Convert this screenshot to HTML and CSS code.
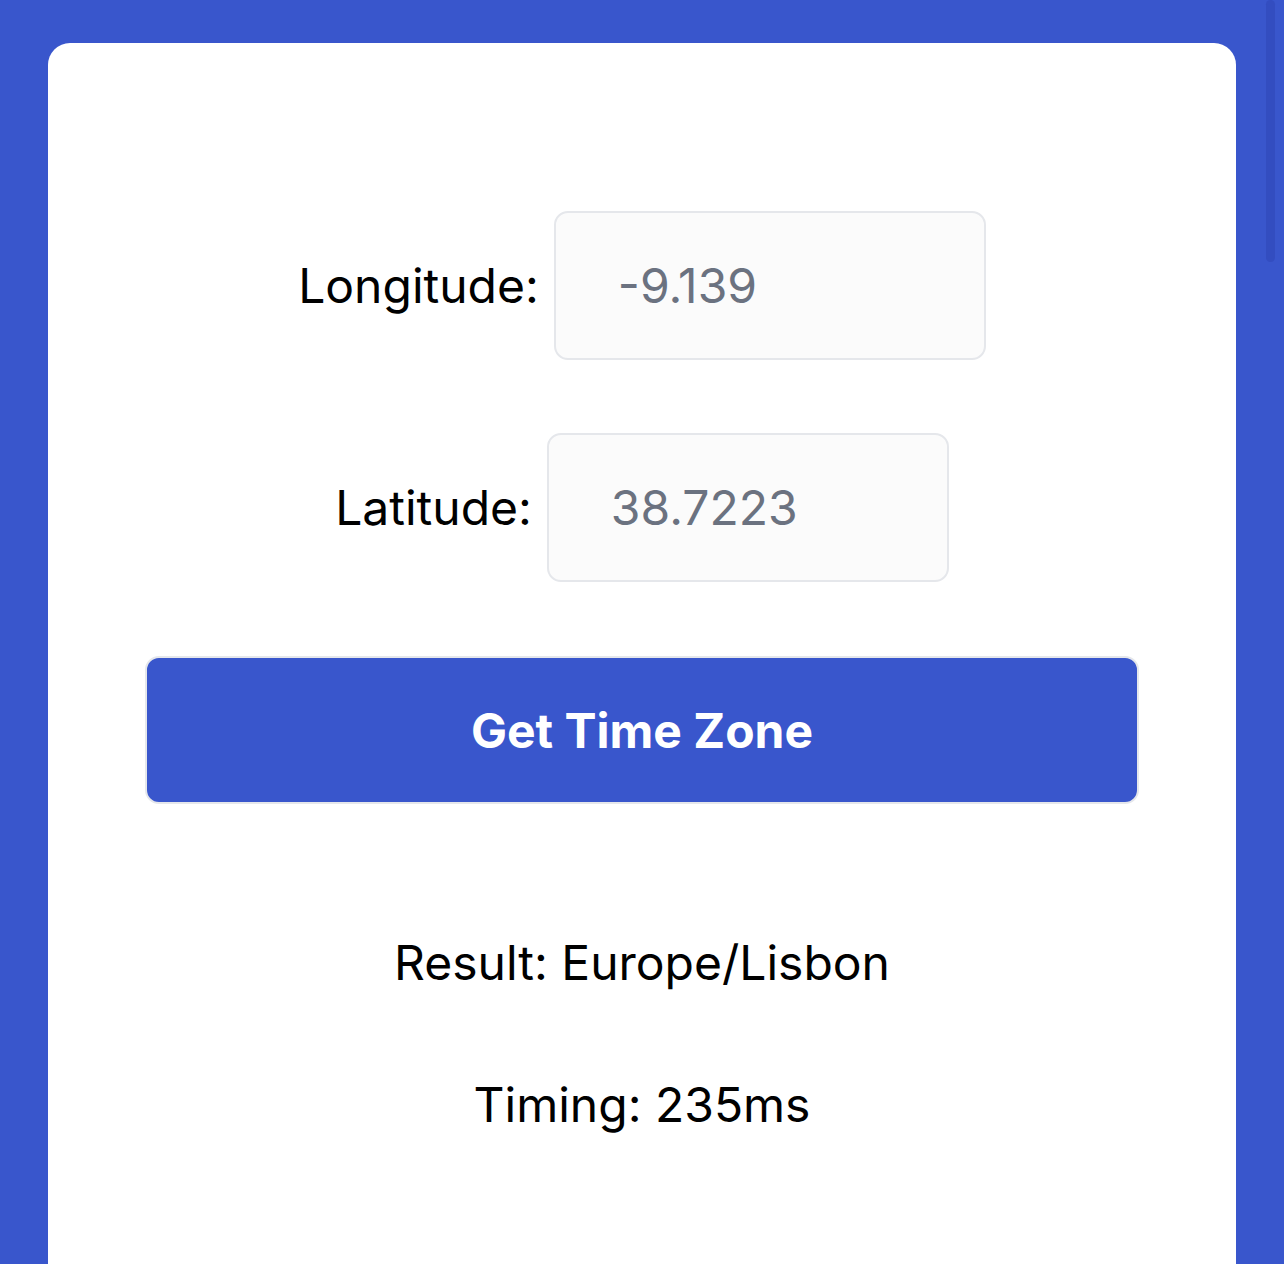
FILE: index.html
```html
<!DOCTYPE html>
<html lang="en">
<head>
<meta charset="utf-8">
<title>Time Zone</title>
<link rel="stylesheet" href="styles.css">
</head>
<body>
<div class="scrollbar"></div>
<main class="card">
  <div class="field">
    <label class="label" for="lon">Longitude:</label>
    <input class="input input-lon" id="lon" type="text" value="-9.139">
  </div>
  <div class="field">
    <label class="label" for="lat">Latitude:</label>
    <input class="input input-lat" id="lat" type="text" value="38.7223">
  </div>
  <button class="btn" type="button">Get Time Zone</button>
  <p class="result">Result: Europe/Lisbon</p>
  <p class="result timing">Timing: 235ms</p>
</main>
</body>
</html>
```
FILE: styles.css
```css
html, body {
  margin: 0;
  padding: 0;
}
body {
  background: #3956cc;
  font-family: Inter, "Noto Sans", sans-serif;
  padding: 43px 48px 0 48px;
  height: 100vh;
  box-sizing: border-box;
  overflow: hidden;
  display: flex;
  flex-direction: column;
}
.scrollbar {
  position: absolute;
  top: 0;
  right: 9px;
  width: 9px;
  height: 262px;
  border-radius: 5px;
  background: rgba(40, 60, 170, 0.35);
}
.card {
  flex: 1;
  background: #ffffff;
  border-radius: 22px 22px 0 0;
  display: flex;
  flex-direction: column;
  align-items: center;
  padding-top: 168px;
  box-sizing: border-box;
  overflow: hidden;
}
.field {
  display: flex;
  align-items: center;
  gap: 15px;
  margin-bottom: 73px;
}
.label {
  font-size: 48px;
  line-height: 58px;
  color: #000;
}
.input {
  height: 149px;
  box-sizing: border-box;
  border: 2px solid #e5e7eb;
  border-radius: 14px;
  background: #fbfbfb;
  font-family: Inter, "Noto Sans", sans-serif;
  font-size: 48px;
  color: #6b7280;
  padding: 0 0 0 62px;
  outline: none;
}
.input-lon { width: 432px; }
.input-lat { width: 402px; }
.btn {
  width: 994px;
  height: 148px;
  margin-top: 1px;
  flex-shrink: 0;
  background: #3956cc;
  border: 2px solid #e5e7eb;
  border-radius: 14px;
  color: #fff;
  font-family: Inter, "Noto Sans", sans-serif;
  font-weight: 700;
  font-size: 48px;
}
.result {
  margin: 130px 0 0 0;
  font-size: 48px;
  line-height: 58px;
  color: #000;
}
.timing {
  margin-top: 84px;
}
```
